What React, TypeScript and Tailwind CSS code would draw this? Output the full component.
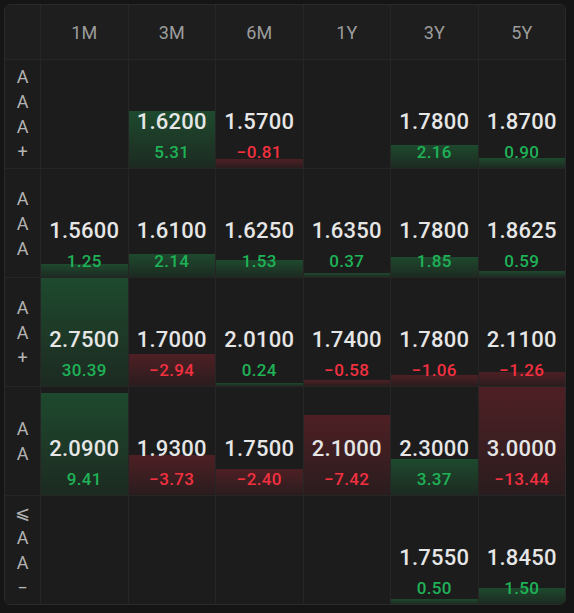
import React from "react";

type Cell = { v: string; c: number } | null;
type Row = { label: string[]; cells: Cell[] };

const cols = ["1M", "3M", "6M", "1Y", "3Y", "5Y"];

const rows: Row[] = [
  {
    label: ["A", "A", "A", "+"],
    cells: [null, { v: "1.6200", c: 5.31 }, { v: "1.5700", c: -0.81 }, null, { v: "1.7800", c: 2.16 }, { v: "1.8700", c: 0.9 }],
  },
  {
    label: ["A", "A", "A"],
    cells: [
      { v: "1.5600", c: 1.25 },
      { v: "1.6100", c: 2.14 },
      { v: "1.6250", c: 1.53 },
      { v: "1.6350", c: 0.37 },
      { v: "1.7800", c: 1.85 },
      { v: "1.8625", c: 0.59 },
    ],
  },
  {
    label: ["A", "A", "+"],
    cells: [
      { v: "2.7500", c: 30.39 },
      { v: "1.7000", c: -2.94 },
      { v: "2.0100", c: 0.24 },
      { v: "1.7400", c: -0.58 },
      { v: "1.7800", c: -1.06 },
      { v: "2.1100", c: -1.26 },
    ],
  },
  {
    label: ["A", "A"],
    cells: [
      { v: "2.0900", c: 9.41 },
      { v: "1.9300", c: -3.73 },
      { v: "1.7500", c: -2.4 },
      { v: "2.1000", c: -7.42 },
      { v: "2.3000", c: 3.37 },
      { v: "3.0000", c: -13.44 },
    ],
  },
  {
    label: ["⩽", "A", "A", "−"],
    cells: [null, null, null, null, { v: "1.7550", c: 0.5 }, { v: "1.8450", c: 1.5 }],
  },
];

function fmt(c: number) {
  const s = Math.abs(c).toFixed(2);
  return c < 0 ? "−" + s : s;
}

function DataCell({ cell }: { cell: Cell }) {
  if (!cell) return <div className="bg-[#1c1c1c]" />;
  const pos = cell.c >= 0;
  const h = Math.min(Math.abs(cell.c) * 10, 100);
  return (
    <div className="relative bg-[#1c1c1c] flex flex-col items-center justify-end pb-[6px]">
      <div
        className={
          "absolute left-0 right-0 bottom-0 bg-gradient-to-b " +
          (pos ? "from-[#1d4a2e] to-[#1c2a21]" : "from-[#4e1f24] to-[#2a1c1e]")
        }
        style={{ height: `${h}%` }}
      />
      <div className="relative text-[22px] leading-[32px] font-medium text-[#e6e6e6] tracking-[0.2px]">{cell.v}</div>
      <div
        className={
          "relative mt-[4px] text-[17px] leading-[20px] font-medium tracking-[0.3px] " +
          (pos ? "text-[#1fb257]" : "text-[#f23040]")
        }
      >
        {fmt(cell.c)}
      </div>
    </div>
  );
}

export default function App() {
  return (
    <div className="min-h-screen bg-[#151515] p-[4px] font-['Roboto','DejaVu_Sans',sans-serif]">
      <div className="w-[562px] rounded-[6px] border border-[#2a2a2a] overflow-hidden">
        <div className="grid grid-cols-[35px_repeat(6,1fr)] grid-rows-[54px_repeat(5,108px)] gap-px bg-[#262626]">
          <div className="bg-[#1e1e1e]" />
          {cols.map((c) => (
            <div key={c} className="bg-[#1e1e1e] flex items-center justify-center text-[18px] text-[#9c9c9c]">
              {c}
            </div>
          ))}
          {rows.map((r, i) => (
            <React.Fragment key={i}>
              <div className="bg-[#1c1c1c] flex flex-col items-center justify-center text-[18px] leading-[25px] text-[#b4b4b4]">
                {r.label.map((l, j) => (
                  <span key={j}>{l}</span>
                ))}
              </div>
              {r.cells.map((c, j) => (
                <DataCell key={j} cell={c} />
              ))}
            </React.Fragment>
          ))}
        </div>
      </div>
    </div>
  );
}
